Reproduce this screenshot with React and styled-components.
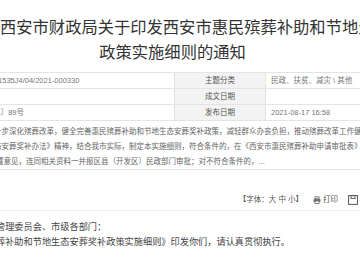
import { Fragment } from "react";
import styled, { createGlobalStyle } from "styled-components";

const GlobalStyle = createGlobalStyle`
  html, body {
    margin: 0;
    padding: 0;
    background: #fff;
  }
  body {
    font-family: "Liberation Sans", "Noto Sans CJK SC", sans-serif;
  }
`;

const Page = styled.div`
  width: 360px;
  height: 270px;
  overflow: hidden;
  background: #fff;
`;

const Title = styled.h1`
  margin: 15px 0 0 0;
  width: 345px;
  font-size: 16.3px;
  font-weight: 400;
  line-height: 25px;
  color: #333;
`;

const TitleLine = styled.div`
  white-space: nowrap;
  text-align: ${(p) => (p.$center ? "center" : "left")};
`;

const InfoGrid = styled.div`
  display: grid;
  grid-template-columns: 66px 228px 91px 160px;
  margin: 7px 0 0 -120px;
  border-top: 1px solid #e4e4e4;
  border-left: 1px solid #e4e4e4;
  font-size: 7.5px;
`;

const Cell = styled.div`
  box-sizing: border-box;
  height: 16px;
  line-height: 15px;
  white-space: nowrap;
  overflow: hidden;
  border-right: 1px solid #e4e4e4;
  border-bottom: 1px solid #e4e4e4;
  background: ${(p) => (p.$label ? "#f3f3f3" : "#fff")};
  color: ${(p) => (p.$label ? "#555" : "#777")};
  text-align: ${(p) => (p.$label ? "center" : "left")};
  padding-left: ${(p) => (p.$label ? 0 : p.$pad || 6)}px;
`;

const Summary = styled.div`
  margin-top: 3px;
  border-bottom: 1px solid #e6e6e6;
  font-size: 7.5px;
  line-height: 15px;
  color: #666;
`;

const ClipLine = styled.div`
  white-space: nowrap;
  text-indent: ${(p) => p.$indent}px;
`;

const ToolRow = styled.div`
  display: flex;
  justify-content: flex-end;
  align-items: flex-end;
  gap: 10px;
  height: 41px;
  box-sizing: border-box;
  padding: 0 2px 5px 0;
  border-bottom: 1px solid #ececec;
  font-size: 7.5px;
  line-height: 10px;
  color: #555;
`;

const ToolItem = styled.span`
  display: flex;
  align-items: center;
  gap: 2px;
`;

const Body = styled.div`
  margin-top: 9px;
  font-size: 9.2px;
  line-height: 15px;
  color: #444;
`;

const PrintIcon = () => (
  <svg width="8" height="8" viewBox="0 0 8 8" aria-hidden="true">
    <rect x="2" y="0.8" width="4" height="2" fill="none" stroke="#666" strokeWidth="0.8" />
    <rect x="0.5" y="2.8" width="7" height="3.4" rx="1" fill="#777" />
    <rect x="2" y="5" width="4" height="2.4" fill="#fff" stroke="#666" strokeWidth="0.8" />
  </svg>
);

const SaveIcon = () => (
  <svg width="10" height="10" viewBox="0 0 10 10" aria-hidden="true">
    <rect x="0.6" y="0.6" width="8.8" height="8.8" fill="none" stroke="#555" strokeWidth="1" />
    <rect x="3" y="0.6" width="4" height="3" fill="none" stroke="#555" strokeWidth="0.9" />
  </svg>
);

const rows = [
  ["索引号", "11610100MB1535J4/04/2021-000330", "主题分类", "民政、扶贫、减灾 \\ 其他"],
  ["发布机构", "西安市财政局", "成文日期", ""],
  ["文号", "市财发〔2021〕89号", "发布日期", "2021-08-17 16:58"],
];

export default function App() {
  return (
    <Page>
      <GlobalStyle />
      <Title>
        <TitleLine>西安市财政局关于印发西安市惠民殡葬补助和节地生态安葬奖补</TitleLine>
        <TitleLine $center>政策实施细则的通知</TitleLine>
      </Title>

      <InfoGrid>
        {rows.map((r) => (
          <Fragment key={r[0]}>
            <Cell $label>{r[0]}</Cell>
            <Cell $pad={7}>{r[1]}</Cell>
            <Cell $label>{r[2]}</Cell>
            <Cell $pad={5}>{r[3]}</Cell>
          </Fragment>
        ))}
      </InfoGrid>

      <Summary>
        <ClipLine $indent={-6}>
          一步深化殡葬改革，健全完善惠民殡葬补助和节地生态安葬奖补政策，减轻群众办丧负担，推动殡葬改革工作健康发展
        </ClipLine>
        <ClipLine $indent={-6}>
          态安葬奖补办法》精神，结合我市实际，制定本实施细则，符合条件的，在《西安市惠民殡葬补助申请审批表》上签
        </ClipLine>
        <ClipLine $indent={-4}>
          署意见，连同相关资料一并报区县（开发区）民政部门审批；对不符合条件的，...
        </ClipLine>
      </Summary>

      <ToolRow>
        <ToolItem>【字体：大 中 小】</ToolItem>
        <ToolItem>
          <PrintIcon />
          打印
        </ToolItem>
        <ToolItem>
          <SaveIcon />
        </ToolItem>
      </ToolRow>

      <Body>
        <ClipLine $indent={-4}>管理委员会、市级各部门：</ClipLine>
        <ClipLine $indent={-4}>
          葬补助和节地生态安葬奖补政策实施细则》印发你们，请认真贯彻执行。
        </ClipLine>
      </Body>
    </Page>
  );
}
